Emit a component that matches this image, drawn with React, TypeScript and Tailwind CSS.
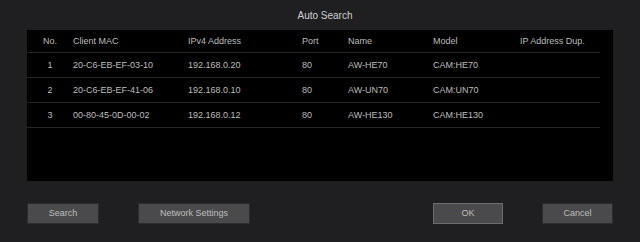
const rows = [
  { no: "1", mac: "20-C6-EB-EF-03-10", ip: "192.168.0.20", port: "80", name: "AW-HE70", model: "CAM:HE70" },
  { no: "2", mac: "20-C6-EB-EF-41-06", ip: "192.168.0.10", port: "80", name: "AW-UN70", model: "CAM:UN70" },
  { no: "3", mac: "00-80-45-0D-00-02", ip: "192.168.0.12", port: "80", name: "AW-HE130", model: "CAM:HE130" },
];

function Cells({ no, mac, ip, port, name, model, dup }: { no: string; mac: string; ip: string; port: string; name: string; model: string; dup: string }) {
  return (
    <>
      <div className="w-[46px] text-center">{no}</div>
      <div className="w-[115px]">{mac}</div>
      <div className="w-[114px]">{ip}</div>
      <div className="w-[46px]">{port}</div>
      <div className="w-[85px]">{name}</div>
      <div className="w-[87px]">{model}</div>
      <div className="flex-1">{dup}</div>
    </>
  );
}

export default function App() {
  return (
    <div className="w-[640px] h-[242px] bg-[#1f1f21] flex flex-col overflow-hidden" style={{ fontFamily: '"Liberation Sans", Arial, sans-serif' }}>
      {/* Title */}
      <div className="h-[30px] pl-[10px] flex items-center justify-center text-[10px] text-[#cfcfcf]">Auto Search</div>

      {/* Result table */}
      <div className="mx-[27px] h-[151px] bg-black text-[9px] text-[#bdbdbd]">
        <div className="mr-[13px] h-[23px] pt-[2px] flex items-center border-b border-[#262626]">
          <Cells no="No." mac="Client MAC" ip="IPv4 Address" port="Port" name="Name" model="Model" dup="IP Address Dup." />
        </div>
        {rows.map((r) => (
          <div key={r.no} className="mr-[13px] h-[25px] pt-[2px] flex items-center border-b border-[#262626]">
            <Cells {...r} dup="" />
          </div>
        ))}
      </div>

      {/* Buttons */}
      <div className="mx-[27px] mt-[22px] flex items-center text-[9px] text-[#bfbfbf]">
        <button className="w-[72px] h-[21px] bg-[#4a4a4c] border border-[#2c2c2e]">Search</button>
        <button className="ml-[39px] w-[112px] h-[21px] bg-[#4a4a4c] border border-[#2c2c2e]">Network Settings</button>
        <button className="ml-auto w-[70px] h-[21px] bg-[#4a4a4c] border border-[#6e6e70]">OK</button>
        <button className="ml-[39px] w-[71px] h-[21px] bg-[#4a4a4c] border border-[#2c2c2e]">Cancel</button>
      </div>
    </div>
  );
}
